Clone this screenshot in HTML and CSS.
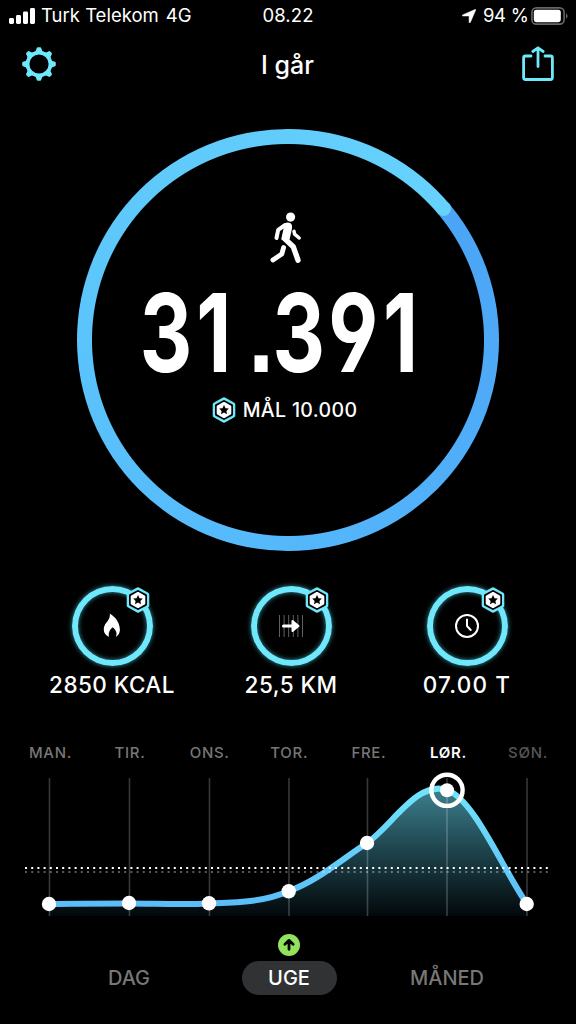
FILE: index.html
```html
<!DOCTYPE html>
<html lang="da">
<head>
<meta charset="utf-8">
<meta name="viewport" content="width=device-width">
<title>I går</title>
<link rel="stylesheet" href="styles.css">
</head>
<body>
<svg class="defs" width="0" height="0" aria-hidden="true">
  <symbol id="badge" viewBox="0 0 24 26">
    <path d="M12 2.2 L21.3 7.4 V18.6 L12 23.8 L2.7 18.6 V7.4Z" fill="#000" stroke="#6fe8fc" stroke-width="4" stroke-linejoin="round"/>
    <path d="M12 4.2 L19.8 8.4 V17.6 L12 21.8 L4.2 17.6 V8.4Z" fill="#000" stroke="#000" stroke-width="2.4" stroke-linejoin="round"/>
    <path d="M12 6.2 L18 9.6 V16.4 L12 19.8 L6 16.4 V9.6Z" fill="#fff" stroke="#fff" stroke-width="2.6" stroke-linejoin="round"/>
    <path d="M12 8.1 L13.5 11.2 L16.8 11.6 L14.4 13.9 L15 17.2 L12 15.6 L9 17.2 L9.6 13.9 L7.2 11.6 L10.5 11.2Z" fill="#000"/>
  </symbol>
</svg>
<div class="screen">
  <div class="status">
    <div class="status-left">
      <svg width="26" height="16" viewBox="0 0 26 16" fill="#fff"><rect x="0" y="10" width="5" height="6" rx="1.4"/><rect x="7" y="7" width="5" height="9" rx="1.4"/><rect x="14" y="3.5" width="5" height="12.5" rx="1.4"/><rect x="21" y="0" width="5" height="16" rx="1.4"/></svg>
      <span class="carrier">Turk Telekom</span><span class="net">4G</span>
    </div>
    <div class="clock">08.22</div>
    <div class="status-right">
      <svg width="14" height="14" viewBox="0 0 14 14"><path d="M13.5 .3 Q14 .2 13.8 .8 L8.3 13.5 Q7.5 14.4 7.1 13.3 V7 H.8 Q-.4 6.6 .6 5.9Z" fill="#fff" stroke="#fff" stroke-width=".5"/></svg>
      <span class="pct">94 %</span>
      <svg width="37" height="18" viewBox="0 0 37 18"><rect x=".9" y=".9" width="32.2" height="16.2" rx="4.4" fill="none" stroke="#666" stroke-width="1.6"/><rect x="2.8" y="2.8" width="27" height="12.4" rx="2.4" fill="#fff"/><path d="M35 6.3 Q36.6 7.5 36.6 9 T35 11.7Z" fill="#666"/></svg>
    </div>
  </div>
  <header class="head">
    <svg width="34" height="34" viewBox="-17 -17 34 34" fill="none" stroke="#6fe8fc">
      <circle r="11.4" stroke-width="3.6"/>
      <g fill="#6fe8fc" stroke="none">
        <path id="tooth" d="M-5.4 -11.6 Q-2.7 -12.4 -2.4 -15.4 Q-2.1 -16.8 -1 -16.8 H1 Q2.1 -16.8 2.4 -15.4 Q2.7 -12.4 5.4 -11.6Z"/>
        <use href="#tooth" transform="rotate(45)"/><use href="#tooth" transform="rotate(90)"/><use href="#tooth" transform="rotate(135)"/><use href="#tooth" transform="rotate(180)"/><use href="#tooth" transform="rotate(225)"/><use href="#tooth" transform="rotate(270)"/><use href="#tooth" transform="rotate(315)"/>
      </g>
    </svg>
    <h1 class="title">I går</h1>
    <svg width="32" height="36" viewBox="0 0 32 36" fill="none" stroke="#6fe8fc" stroke-width="2.8" stroke-linecap="round" stroke-linejoin="round"><path d="M9 10 H3.5 Q1.6 10 1.6 12 V31.5 Q1.6 33.5 3.5 33.5 H28.5 Q30.4 33.5 30.4 31.5 V12 Q30.4 10 28.5 10 H23"/><path d="M16 20.5 V2.5 M10.8 5.5 L16 1.8 L21.2 5.5"/></svg>
  </header>

  <section class="hero">
    <div class="ring"></div>
    <div class="hero-body">
      <svg class="walker" width="34" height="54" viewBox="0 0 34 54" fill="none" stroke="#fff" stroke-linecap="round" stroke-linejoin="round">
        <circle cx="21.6" cy="6.1" r="4.6" fill="#fff" stroke="none"/>
        <path d="M15.8 12.2 Q18.8 10.6 21.6 12.2 Q23.6 14 22.9 18 L20.6 28.6 L12.2 28.6 L14 20Z" fill="#fff" stroke="none"/>
        <path d="M16.2 14 L9.2 18.8 L7.5 27" stroke-width="4"/>
        <path d="M15.6 27.6 L24.3 35.8 L29 49.1" stroke-width="5.4"/>
        <path d="M14.6 36.5 L12.8 43 L3.9 49" stroke-width="4.8"/>
        <path d="M25 20.4 L25.6 23.2 L30.2 27" stroke-width="3.5"/>
      </svg>
      <svg class="steps" width="300" height="140" viewBox="0 0 300 140"><text class="steps-text" transform="scale(.75 1)" text-anchor="middle" y="113" x="37.3 101 164 214.5 287 350">31.391</text></svg>
      <div class="goal"><svg width="24" height="26"><use href="#badge"/></svg><span>MÅL 10.000</span></div>
    </div>
  </section>

  <section class="stats">
    <div class="stat">
      <div class="dial">
        <svg width="18" height="26" viewBox="0 0 18 26"><path d="M6.8 .5 Q12.5 4 15.3 9.7 Q19.5 19.5 12.8 24 Q15.2 18.5 9.6 14.2 Q4.6 18.5 6 24 Q-.7 20.5 1.2 13.5 Q2.2 10.5 4.7 8 Q7.4 5 6.8 .5Z" fill="#fff"/></svg>
        <svg class="dial-badge" width="24" height="26"><use href="#badge"/></svg>
      </div>
      <div class="value kcal">2850 KCAL</div>
    </div>
    <div class="stat">
      <div class="dial">
        <svg width="26" height="22" viewBox="0 0 26 22"><path d="M1.5 0V22M6.1 0V22M10.7 0V22M15.3 0V22M19.9 0V22M24.5 0V22" stroke="#606060"/><path d="M5.5 11H16" stroke="#fff" stroke-width="3" stroke-linecap="round"/><path d="M14.5 6 L20.5 11 L14.5 16Z" fill="#fff" stroke="#fff" stroke-width="2" stroke-linejoin="round"/></svg>
        <svg class="dial-badge" width="24" height="26"><use href="#badge"/></svg>
      </div>
      <div class="value km">25,5 KM</div>
    </div>
    <div class="stat">
      <div class="dial">
        <svg width="26" height="26" viewBox="0 0 26 26" fill="none" stroke="#fff" stroke-width="2"><circle cx="13" cy="13" r="11"/><path d="M13 6.5V13L16.7 17" stroke-linecap="round" stroke-linejoin="round"/></svg>
        <svg class="dial-badge" width="24" height="26"><use href="#badge"/></svg>
      </div>
      <div class="value time">07.00 T</div>
    </div>
  </section>

  <section class="week">
    <div class="days"><span>MAN.</span><span>TIR.</span><span>ONS.</span><span>TOR.</span><span>FRE.</span><span class="day-on">LØR.</span><span class="day-next">SØN.</span></div>
    <svg class="chart" width="576" height="150" viewBox="0 770 576 150">
      <defs>
        <linearGradient id="line" gradientUnits="userSpaceOnUse" x1="0" y1="788" x2="0" y2="905"><stop offset="0" stop-color="#70e5fa"/><stop offset="1" stop-color="#5bbdf8"/></linearGradient>
        <linearGradient id="area" gradientUnits="userSpaceOnUse" x1="0" y1="788" x2="0" y2="916"><stop offset="0" stop-color="#3d818e"/><stop offset=".5" stop-color="#1d424b"/><stop offset="1" stop-color="#02080b"/></linearGradient>
      </defs>
      <path d="M49 904 C76 903.5 102 903.5 129 903.5 C156 903.5 182 905 209 903.5 C236 902.5 263 902.5 289 891 C317 881 341 860 367 843 C392 826 417 780 447 790 C474 799 502 868 527 904 V916 H49Z" fill="url(#area)"/>
      <path d="M49.5 778V916M129.5 778V916M209.5 778V916M289 778V916M367.5 778V916M447 778V916M527 778V916" stroke="#fff" stroke-opacity=".22" stroke-width="1.6"/>
      <path d="M49 904 C76 903.5 102 903.5 129 903.5 C156 903.5 182 905 209 903.5 C236 902.5 263 902.5 289 891 C317 881 341 860 367 843 C392 826 417 780 447 790 C474 799 502 868 527 904" fill="none" stroke="url(#line)" stroke-width="6"/>
      <path d="M25 868H550" stroke="#fff" stroke-width="2" stroke-dasharray="2 4.2"/>
      <path d="M25 872H550" stroke="#fff" stroke-opacity=".35" stroke-width="2" stroke-dasharray="2 4.2"/>
      <g fill="#fff"><circle cx="49" cy="904" r="7.2"/><circle cx="129" cy="903" r="7.2"/><circle cx="209" cy="903.3" r="7.2"/><circle cx="288.7" cy="891.3" r="7.2"/><circle cx="367" cy="843" r="7.2"/><circle cx="447" cy="790.3" r="7"/><circle cx="526.7" cy="904" r="7.2"/></g>
      <circle cx="447" cy="790.3" r="15.6" fill="none" stroke="#fff" stroke-width="4.4"/>
    </svg>
  </section>

  <div class="trend"><svg width="22" height="22" viewBox="0 0 22 22"><circle cx="11" cy="11" r="11" fill="#93e25d"/><path d="M11 15.3V8M6.9 10.2L11 6.4L15.1 10.2" fill="none" stroke="#000" stroke-width="2.8" stroke-linecap="round" stroke-linejoin="round"/></svg></div>
  <nav class="tabs"><span>DAG</span><span class="tab-on">UGE</span><span>MÅNED</span></nav>
</div>
</body>
</html>
```
FILE: styles.css
```css
* { box-sizing: border-box; }
body { margin: 0; background: #000; color: #fff; font-family: Inter, "Liberation Sans", sans-serif; }
svg { display: block; flex: none; }
.defs { position: absolute; }
.screen { width: 576px; height: 1024px; display: flex; flex-direction: column; overflow: hidden; background: #000; white-space: nowrap; }

.status { height: 31px; padding: 0 8px 0 9px; display: grid; grid-template-columns: 1fr 60px 1fr; align-items: center; font-size: 18.5px; line-height: 31px; }
.status-left { display: flex; align-items: center; }
.carrier { margin-left: 6px; letter-spacing: 0; }
.net { margin-left: 7px; }
.clock { text-align: center; letter-spacing: .1px; margin-left: -1px; }
.status-right { display: flex; align-items: center; justify-content: flex-end; }
.pct { margin: 0 2.5px 0 7px; letter-spacing: -.3px; }

.head { height: 69px; padding: 0 22px 3px 22px; display: flex; justify-content: space-between; align-items: center; }
.title { margin: 2px 3px 0 0; font-size: 25px; font-weight: 500; letter-spacing: 0; }

.hero { margin: 29px auto 0; width: 422px; height: 422px; display: grid; flex: none; }
.ring, .hero-body { grid-area: 1 / 1; }
.ring { position: relative; border-radius: 50%; background: radial-gradient(circle, #000 195.5px, transparent 196.5px), conic-gradient(from 50deg, #4ba4f5, #50adf9 20%, #55b9fb 38%, #5ec8fb 70%, #66d2fc); }
.ring::after { content: ""; position: absolute; left: 359px; top: 72px; width: 15px; height: 15px; border-radius: 50%; background: #66d2fc; }
.hero-body { position: relative; display: flex; flex-direction: column; align-items: center; padding-top: 82px; }
.walker { margin-right: 4px; }
.steps { margin: -6px 0 -20px; }
.steps-text { font: 700 108.5px Inter, sans-serif; font-feature-settings: "cv04", "ss07"; fill: #fff; }
.goal { margin-top: 18px; margin-right: 7px; display: flex; align-items: center; gap: 7px; font-size: 19.5px; font-weight: 500; letter-spacing: .35px; line-height: 26px; }

.stats { margin-top: 35px; padding-left: 23px; display: grid; grid-template-columns: 178px 180px 172px; }
.stat { display: flex; flex-direction: column; align-items: center; }
.dial { position: relative; width: 81px; height: 80px; border: 6.5px solid #6fe8fc; border-radius: 50%; display: flex; align-items: center; justify-content: center; box-shadow: 0 0 5px #398f9e, inset 0 0 5px #398f9e; }
.dial-badge { position: absolute; right: -3.5px; top: -5px; }
.value { margin-top: 5px; font-size: 22.5px; font-weight: 500; line-height: 28px; letter-spacing: .45px; }
.time { letter-spacing: 1.2px; }

.week { margin-top: 44px; }
.days { display: grid; grid-template-columns: repeat(7, 79.6px); margin-left: 10.7px; font-size: 15px; line-height: 20px; letter-spacing: .7px; text-align: center; font-weight: 500; color: #777; }
.day-on { color: #fff; font-weight: 600; }
.day-next { color: #555; }
.chart { margin-top: 7px; }

.trend { margin-top: 14px; display: flex; justify-content: center; padding-left: 1px; }
.tabs { margin-top: 5px; padding-left: 49px; display: grid; grid-template-columns: 160px 160px 156px; font-size: 20px; font-weight: 500; line-height: 34px; color: #777; text-align: center; justify-items: center; }
.tab-on { width: 95px; border-radius: 17px; background: #303234; color: #fff; }
```
